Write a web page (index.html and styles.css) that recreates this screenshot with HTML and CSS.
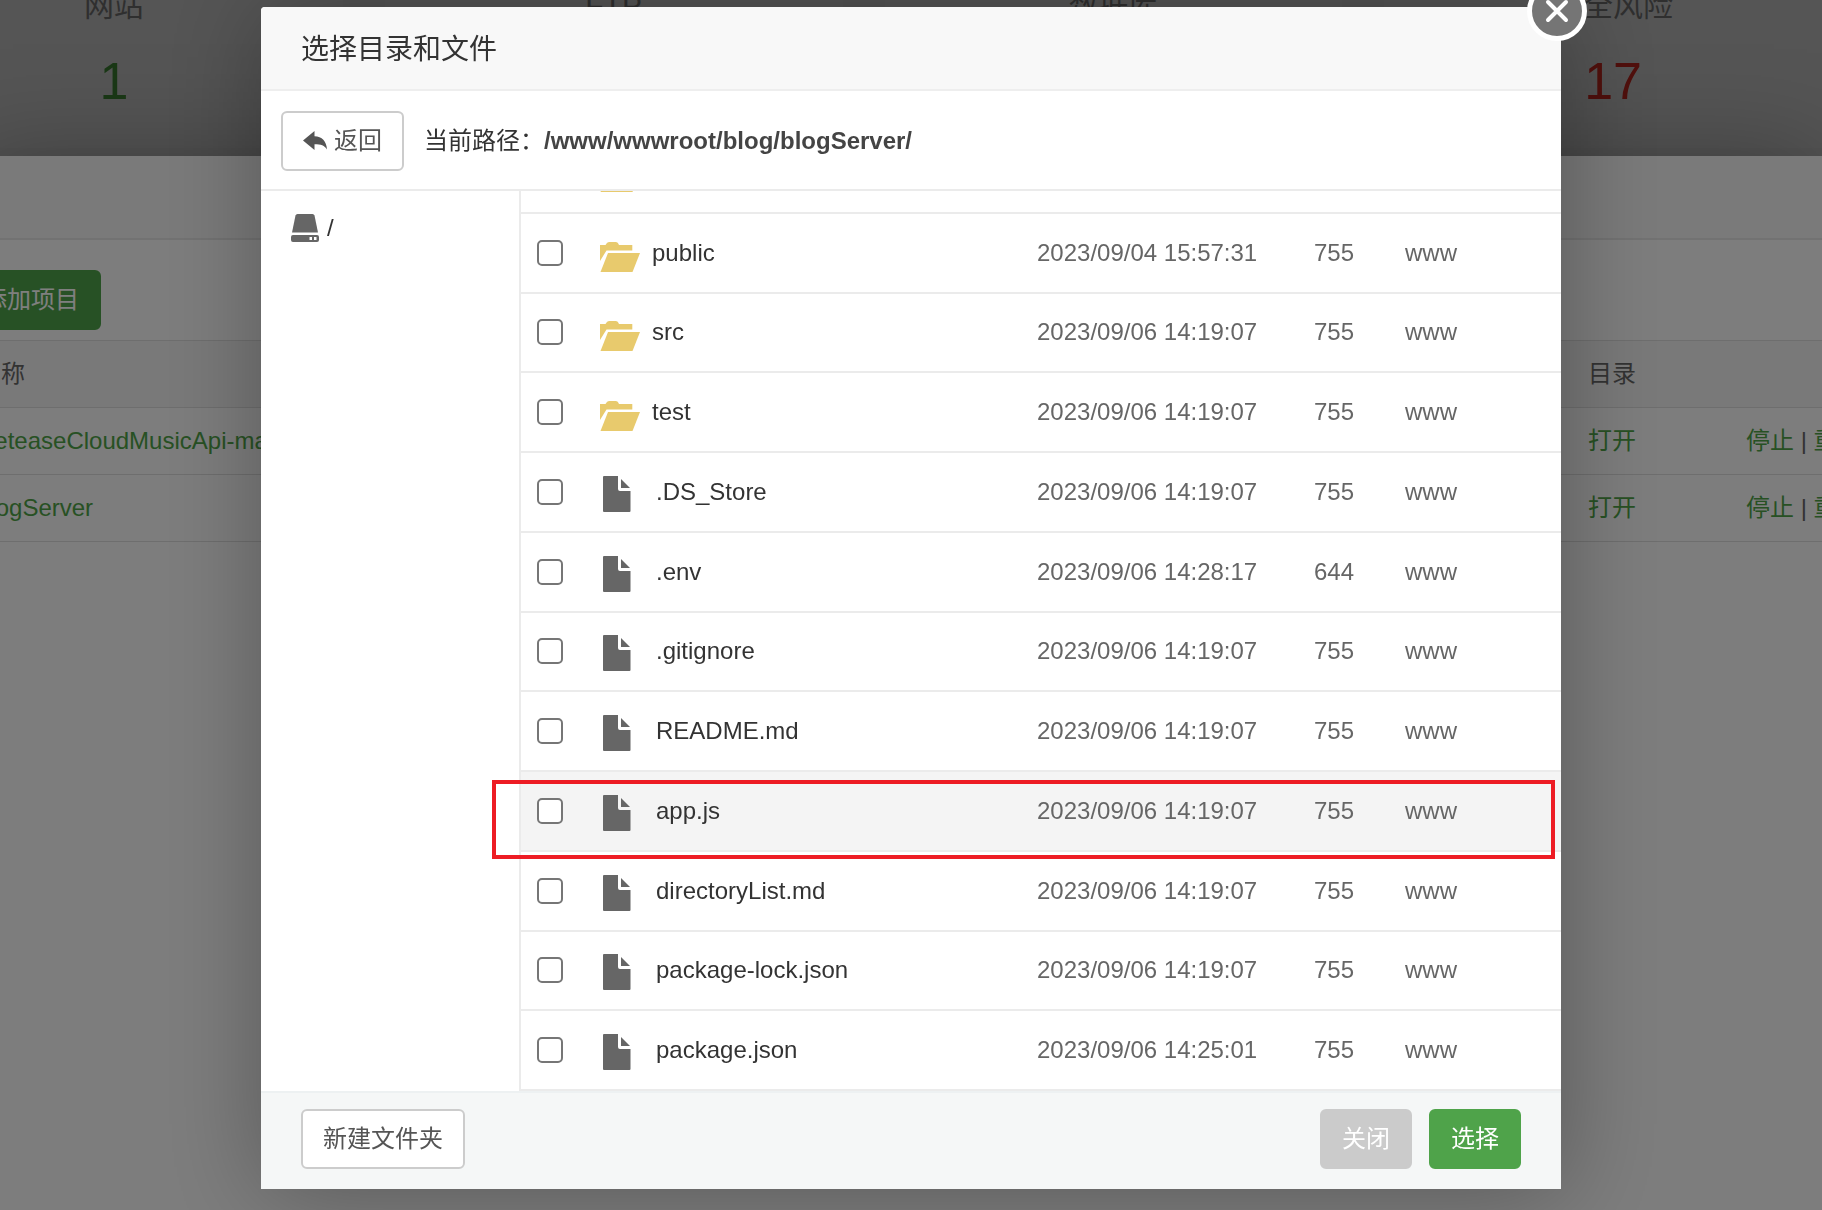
FILE: index.html
```html
<!DOCTYPE html>
<html lang="zh-CN">
<head>
<meta charset="utf-8">
<title>选择目录和文件</title>
<link rel="stylesheet" href="styles.css">
</head>
<body>
<svg class="sprite" aria-hidden="true">
  <symbol id="folder" viewBox="0 0 40 30">
    <path d="M0 3h5.500Q7 0 9 0h7q2 0 3 3h13.300v5.500H6.500L0 19z"/>
    <path d="M8 11h32l-7.500 19H.5z"/>
  </symbol>
  <symbol id="file" viewBox="0 0 28 36">
    <path d="M1 0h14v13q0 2 2 2h10.500v20q0 1-1 1H1q-1 0-1-1V1q0-1 1-1z"/>
    <path d="M18 3l9 9h-9z"/>
  </symbol>
</svg>

<div class="page">
  <section class="stats">
    <div class="stat"><span>网站</span><b>1</b></div>
    <div class="stat"><span>FTP</span><b>1</b></div>
    <div class="stat"><span>数据库</span><b>1</b></div>
    <div class="stat risk"><span>安全风险</span><b>17</b></div>
  </section>
  <main class="panel">
    <div class="panel-tabs"></div>
    <div class="panel-tools"><button class="btn btn-green" type="button">添加项目</button></div>
    <table class="projects">
      <thead><tr><th>名称</th><th class="col-dir">目录</th><th class="col-ops"></th></tr></thead>
      <tbody>
        <tr><td><a href="#">NeteaseCloudMusicApi-main</a></td><td><a href="#">打开</a></td><td><a href="#">停止</a> | <a href="#">重启</a></td></tr>
        <tr><td><a href="#">blogServer</a></td><td><a href="#">打开</a></td><td><a href="#">停止</a> | <a href="#">重启</a></td></tr>
      </tbody>
    </table>
  </main>
</div>

<div class="mask">
  <div class="dialog" role="dialog" aria-labelledby="dialog-title">
    <header class="dialog-head"><h1 id="dialog-title">选择目录和文件</h1></header>
    <div class="pathbar">
      <button class="btn btn-plain btn-back" type="button">
        <svg width="24" height="20" viewBox="0 0 24 20" aria-hidden="true"><path d="M0 9.500L11.500 0v5.200C19 5.500 23.500 10 24 18.500 21.500 14.500 18 13.300 11.500 13.300V19z"/></svg>
        <span>返回</span>
      </button>
      <p class="path">当前路径：<b>/www/wwwroot/blog/blogServer/</b></p>
    </div>
    <div class="browser">
      <nav class="disks">
        <a class="disk" href="#">
          <svg width="28" height="28" viewBox="0 0 28 28" aria-hidden="true"><path d="M6.500 0h15q1.500 0 2 1.500L27 18.500H1L4.500 1.500Q5 0 6.500 0z"/><path fill-rule="evenodd" d="M2 21h24q2 0 2 2v3q0 2-2 2H2q-2 0-2-2v-3q0-2 2-2zM18.500 23v3h2.500v-3zM23 23v3h2.500v-3z"/></svg>
          <span>/</span>
        </a>
      </nav>
      <div class="files">
        <table class="file-table">
          <colgroup><col class="c-check"><col><col class="c-date"><col class="c-mode"><col class="c-user"></colgroup>
          <tbody>
            <tr><td><input type="checkbox" aria-label="node_modules"></td><td><div class="name"><svg class="folder"><use href="#folder"/></svg>node_modules</div></td><td>2023/09/04 15:57:31</td><td>755</td><td>www</td></tr>
            <tr><td><input type="checkbox" aria-label="public"></td><td><div class="name"><svg class="folder"><use href="#folder"/></svg>public</div></td><td>2023/09/04 15:57:31</td><td>755</td><td>www</td></tr>
            <tr><td><input type="checkbox" aria-label="src"></td><td><div class="name"><svg class="folder"><use href="#folder"/></svg>src</div></td><td>2023/09/06 14:19:07</td><td>755</td><td>www</td></tr>
            <tr><td><input type="checkbox" aria-label="test"></td><td><div class="name"><svg class="folder"><use href="#folder"/></svg>test</div></td><td>2023/09/06 14:19:07</td><td>755</td><td>www</td></tr>
            <tr><td><input type="checkbox" aria-label=".DS_Store"></td><td><div class="name"><svg class="file"><use href="#file"/></svg>.DS_Store</div></td><td>2023/09/06 14:19:07</td><td>755</td><td>www</td></tr>
            <tr><td><input type="checkbox" aria-label=".env"></td><td><div class="name"><svg class="file"><use href="#file"/></svg>.env</div></td><td>2023/09/06 14:28:17</td><td>644</td><td>www</td></tr>
            <tr><td><input type="checkbox" aria-label=".gitignore"></td><td><div class="name"><svg class="file"><use href="#file"/></svg>.gitignore</div></td><td>2023/09/06 14:19:07</td><td>755</td><td>www</td></tr>
            <tr><td><input type="checkbox" aria-label="README.md"></td><td><div class="name"><svg class="file"><use href="#file"/></svg>README.md</div></td><td>2023/09/06 14:19:07</td><td>755</td><td>www</td></tr>
            <tr class="active"><td><input type="checkbox" aria-label="app.js"></td><td><div class="name"><svg class="file"><use href="#file"/></svg>app.js</div></td><td>2023/09/06 14:19:07</td><td>755</td><td>www</td></tr>
            <tr><td><input type="checkbox" aria-label="directoryList.md"></td><td><div class="name"><svg class="file"><use href="#file"/></svg>directoryList.md</div></td><td>2023/09/06 14:19:07</td><td>755</td><td>www</td></tr>
            <tr><td><input type="checkbox" aria-label="package-lock.json"></td><td><div class="name"><svg class="file"><use href="#file"/></svg>package-lock.json</div></td><td>2023/09/06 14:19:07</td><td>755</td><td>www</td></tr>
            <tr><td><input type="checkbox" aria-label="package.json"></td><td><div class="name"><svg class="file"><use href="#file"/></svg>package.json</div></td><td>2023/09/06 14:25:01</td><td>755</td><td>www</td></tr>
          </tbody>
        </table>
      </div>
    </div>
    <footer class="dialog-foot">
      <button class="btn btn-plain" type="button">新建文件夹</button>
      <div class="foot-actions">
        <button class="btn btn-gray" type="button">关闭</button>
        <button class="btn btn-green" type="button">选择</button>
      </div>
    </footer>
    <button class="close" type="button" aria-label="关闭窗口">
      <svg width="24" height="24" viewBox="0 0 24 24" aria-hidden="true"><path d="M3 3l18 18M21 3L3 21"/></svg>
    </button>
    <div class="marker"></div>
  </div>
</div>
</body>
</html>
```
FILE: styles.css
```css
* { box-sizing: border-box; }
body {
  margin: 0;
  font: 24px/34px "Liberation Sans", "Noto Sans CJK SC", sans-serif;
  color: #666;
  background: #fafafa;
}
button, input { font: inherit; margin: 0; }
a { color: #4fa247; text-decoration: none; }
.sprite { display: none; }

/* Page behind the dialog */
.page { height: 100vh; overflow: hidden; background: #a7a7a7; }
.stats {
  display: grid;
  grid-template-columns: repeat(4, 1fr);
  gap: 42px;
  height: 156px;
  margin: 0 -20px 0 -115px;
  padding-bottom: 8px;
}
.stat {
  display: flex;
  flex-direction: column;
  align-items: center;
  gap: 28px;
  margin-top: -14px;
  font-size: 30px;
  line-height: 40px;
  color: #5e5e5e;
  background: #aaa;
}
.stat b { font-size: 52px; line-height: 54px; font-weight: 400; color: #34702c; }
.stat.risk b { color: #a3211a; }
.panel {
  position: relative;
  min-height: 100vh;
  margin-left: -39px;
  background: #fafafa;
  box-shadow: 2px 2px 100px rgba(0, 0, 0, .3);
}
.panel-tabs { height: 84px; background: #f4f4f4; border-bottom: 2px solid #e4e4e4; }
.panel-tools { padding: 30px 0 10px; }
.projects { width: 100%; border-collapse: collapse; table-layout: fixed; border-top: 1px solid #dcdcdc; }
.projects th, .projects td {
  height: 67px;
  padding: 0 0 0 16px;
  text-align: left;
  font-weight: 400;
  white-space: nowrap;
  border-bottom: 1px solid #dcdcdc;
}
.projects th { background: #f2f2f2; }
.col-dir { width: 158px; }
.col-ops { width: 92px; }

/* Buttons */
.btn {
  height: 60px;
  padding: 0 20px;
  border: 2px solid transparent;
  border-radius: 6px;
  color: #fff;
}
.btn-green { background: #4fa34a; border-color: #4fa34a; }
.btn-gray { background: #cbcbcb; border-color: #cbcbcb; }
.btn-plain { background: #fff; border-color: #ccc; color: #555; }
.btn-back { display: flex; align-items: center; gap: 7px; }
.btn svg { fill: #555; }

/* Dialog */
.mask {
  position: fixed;
  inset: 0;
  padding-top: 7px;
  background: rgba(0, 0, 0, .5);
}
.dialog {
  position: relative;
  max-width: 1300px;
  margin: 0 auto;
  background: #fff;
  border-radius: 4px 4px 0 0;
  box-shadow: 2px 2px 100px rgba(0, 0, 0, .3);
}
.dialog-head {
  padding: 22px 40px 18px;
  background: #f8f8f8;
  border-bottom: 2px solid #eee;
  border-radius: 4px 4px 0 0;
}
.dialog-head h1 { margin: 0; font-size: 28px; line-height: 42px; font-weight: 400; color: #333; }
.pathbar {
  display: flex;
  align-items: center;
  gap: 20px;
  padding: 20px 20px 18px;
  border-bottom: 2px solid #ebebeb;
}
.path { margin: 0; color: #333; }
.path b { color: #444; }
.browser { display: flex; height: 900px; }
.disks { flex: none; width: 260px; padding: 20px 30px; border-right: 2px solid #ebebeb; }
.disk { display: flex; align-items: center; gap: 8px; color: #333; }
.disk svg { fill: #666; }
.files { flex: 1; display: flex; align-items: flex-end; overflow: hidden; }
.file-table { width: 100%; height: 957px; table-layout: fixed; border-collapse: separate; border-spacing: 0; }
.file-table td { padding: 0; border-bottom: 2px solid #ebebeb; white-space: nowrap; }
.file-table .active { background: #f4f4f4; }
.c-check { width: 79px; }
.c-date { width: 277px; }
.c-mode { width: 91px; }
.c-user { width: 156px; }
.file-table input {
  appearance: none;
  display: block;
  width: 26px;
  height: 26px;
  margin-left: 16px;
  border: 2px solid #767676;
  border-radius: 5px;
  background: #fff;
}
.name { display: flex; align-items: center; height: 40px; color: #333; }
.folder { width: 40px; height: 38px; padding-top: 8px; margin-right: 12px; fill: #e8ca6d; }
.file { width: 28px; height: 40px; padding-top: 4px; margin: 0 25px 0 3px; fill: #666; }
.dialog-foot {
  display: flex;
  justify-content: space-between;
  padding: 16px 40px 20px;
  background: #f5f7f7;
  border-top: 2px solid #edf1f2;
}
.foot-actions { display: flex; gap: 17px; }
.close {
  position: absolute;
  top: -26px;
  right: -26px;
  display: grid;
  place-items: center;
  width: 60px;
  height: 60px;
  padding: 0;
  border: 5px solid #fff;
  border-radius: 50%;
  background: #757575;
}
.close svg { fill: none; stroke: #fff; stroke-width: 4; stroke-linecap: round; }
.marker {
  position: absolute;
  top: 773px;
  left: 231px;
  right: 6px;
  height: 79px;
  border: 4px solid #ed1c24;
  pointer-events: none;
}
```
